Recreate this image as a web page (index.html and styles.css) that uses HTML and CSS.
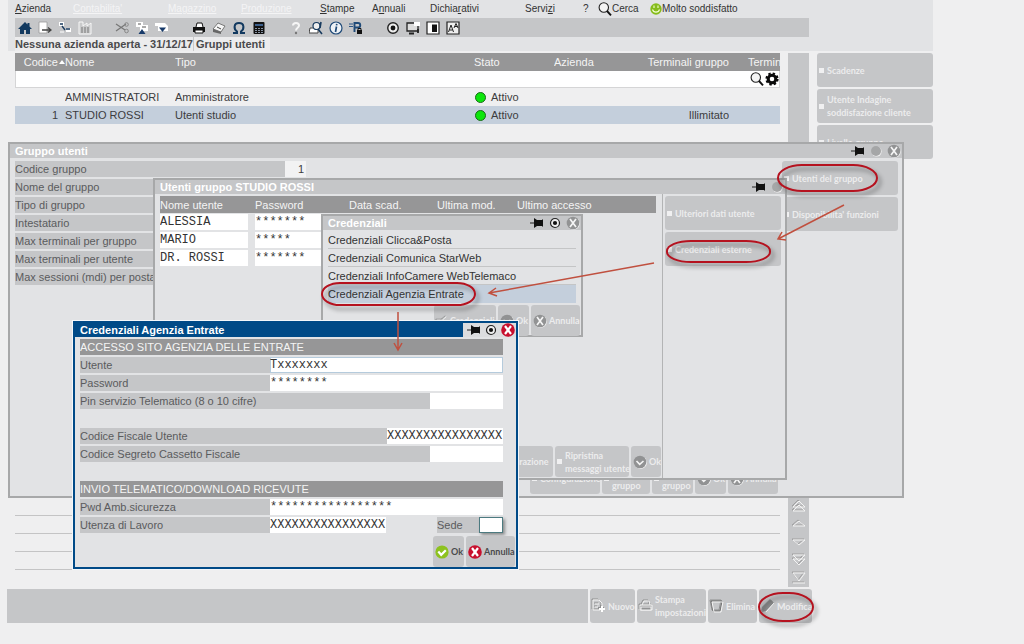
FILE: index.html
```html
<!DOCTYPE html>
<html lang="it">
<head>
<meta charset="utf-8">
<title>Gruppi utenti</title>
<link rel="stylesheet" href="styles.css">
</head>
<body>
<svg class="defs" aria-hidden="true">
  <symbol id="pin" viewBox="0 0 14 14"><path d="M0 7h5" stroke="#222" stroke-width="1"/><path d="M4 2l3 2h5l1-1v8l-1-1H7l-3 2z" fill="#111"/></symbol>
  <symbol id="target" viewBox="0 0 12 12"><circle cx="6" cy="6" r="4.5" fill="#eee" stroke="#222" stroke-width="1.2"/><circle cx="6" cy="6" r="2.1" fill="#111"/></symbol>
  <symbol id="disc" viewBox="0 0 12 12"><circle cx="6.6" cy="6.6" r="5" fill="#f1f1f1"/><circle cx="6" cy="6" r="5" fill="#a5a6a7"/></symbol>
  <symbol id="xgray" viewBox="0 0 14 14"><circle cx="7.6" cy="7.6" r="6.2" fill="#f3f3f3"/><circle cx="7" cy="7" r="6.3" fill="#929394"/><path d="M4 3l6 8M10 3l-6 8" stroke="#f5f5f5" stroke-width="1.7"/></symbol>
  <symbol id="xred" viewBox="0 0 14 14"><circle cx="7" cy="7" r="6.8" fill="#c8102e"/><path d="M4 3l6 8M10 3l-6 8" stroke="#fff" stroke-width="2.2"/></symbol>
  <symbol id="okgray" viewBox="0 0 14 14"><circle cx="7.7" cy="7.7" r="6.2" fill="#f3f3f3"/><circle cx="7" cy="7" r="6.3" fill="#919293"/><path d="M3.5 6l3.2 3.4L10.500 6" fill="none" stroke="#f5f5f5" stroke-width="1.6"/></symbol>
  <symbol id="okgreen" viewBox="0 0 14 14"><circle cx="7" cy="7" r="6.6" fill="#8dc21f"/><path d="M3.300 6.500l2.900 3.300 4.600-4.600" fill="none" stroke="#fff" stroke-width="2.2"/></symbol>
  <symbol id="lens" viewBox="0 0 14 14"><circle cx="5.800" cy="5.500" r="4.700" fill="#f4f4f4" stroke="#222" stroke-width="1.100"/><path d="M9 9l4 4.300" stroke="#111" stroke-width="1.900"/></symbol>
  <symbol id="printer" viewBox="0 0 14 14"><path d="M4 6l1-4h5l1 4" fill="#fff" stroke="#111"/><path d="M1 6h12v5H1z" fill="#111"/><path d="M3 9h8v3H3z" fill="#fff" stroke="#111"/></symbol>
</svg>

<div class="app">
  <header class="top">
    <nav class="menu">
      <a href="#"><u>A</u>zienda</a>
      <a href="#" class="off">Contabilita'</a>
      <a href="#" class="off">Magazzino</a>
      <a href="#" class="off">Produzione</a>
      <a href="#"><u>S</u>tampe</a>
      <a href="#">A<u>n</u>nuali</a>
      <a href="#">Dichia<u>r</u>ativi</a>
      <a href="#">Servi<u>z</u>i</a>
      <a href="#">?</a>
      <a href="#"><svg class="i14"><use href="#lens"/></svg>Cerca</a>
      <a href="#"><svg class="i12" viewBox="0 0 12 12"><circle cx="6" cy="6" r="5.700" fill="#86bc1c"/><path d="M4 2.500v2.500M8 2.500v2.500M2.500 6.500c1 3.500 6 3.500 7 0" stroke="#f4ffd8" stroke-width="1.100" fill="none"/></svg>Molto soddisfatto</a>
    </nav>
    <div class="toolbar">
      <div class="tools">
        <button aria-label="Home"><svg viewBox="0 0 14 14"><path d="M7 1L0 8h2v5h4V9h2v4h4V8h2l-2.500-2.500V2h-2v1.500z" fill="#12395f"/></svg></button>
        <button aria-label="Esci"><svg viewBox="0 0 14 14"><path d="M1 1h8v11H1z" fill="#fff" stroke="#999" stroke-width=".8"/><path d="M4 9h8M10 6.500L13 9l-3 2.500" stroke="#444" stroke-width="1.300" fill="none"/></svg></button>
        <button aria-label="Collega"><svg viewBox="0 0 14 14"><path d="M1 1h5v4H1zM8 7h5v4H8z" fill="#fff"/><path d="M2 3h3M4 5l3 4M8 8h4" stroke="#173a5e" stroke-width="1.300" fill="none"/><path d="M2 11h4" stroke="#fff"/></svg></button>
        <button aria-label="Azienda"><svg viewBox="0 0 14 14"><path d="M1 1v12h12V2L9 5V2L5 5V1z" fill="#c9cacb" stroke="#f7f7f7"/><path d="M3 7h8M3 9h8M3 11h8" stroke="#777" stroke-dasharray="2 1"/></svg></button>
      </div>
      <div class="tools">
        <button aria-label="Taglia"><svg viewBox="0 0 14 14"><path d="M1 3l9 6M1 10l10-7" stroke="#777" stroke-width="1.200"/><circle cx="11.500" cy="10" r="1.800" fill="none" stroke="#888"/><circle cx="11.500" cy="3.500" r="1.800" fill="none" stroke="#888"/></svg></button>
        <button aria-label="Copia"><svg viewBox="0 0 14 14"><path d="M1 1h7v5H1zM5 4h8v6H5z" fill="#fff"/><path d="M3 3h3M7 6h4" stroke="#555"/><path d="M7 8l3.500 5h-7z" fill="#173a6a"/></svg></button>
        <button aria-label="Incolla"><svg viewBox="0 0 14 14"><path d="M0 2h10l3 3v5H3V5H0z" fill="#fff"/><path d="M4 6.500h7L7.500 11z" fill="#173a6a"/></svg></button>
      </div>
      <div class="tools">
        <button aria-label="Stampa"><svg><use href="#printer"/></svg></button>
        <button aria-label="Cancella"><svg viewBox="0 0 14 14"><path d="M1 8l5-6 7 3-4 6z" fill="#f6f6f6" stroke="#777"/><path d="M1 8l8 3v2L1 11z" fill="#666"/><path d="M5 6l4 2" stroke="#444"/></svg></button>
        <button aria-label="Simboli"><svg viewBox="0 0 14 14"><path d="M1 12h4v-1.500C1.500 8 1.500 2 7 2s5.500 6 2 8.500V12h4" stroke="#12395f" stroke-width="2" fill="none"/></svg></button>
        <button aria-label="Calcolatrice"><svg viewBox="0 0 14 14"><rect x="1.500" y="1" width="11" height="12" rx="1" fill="#111"/><path d="M3 3h8v2H3z" fill="#3c5f8b"/><path d="M3 7.500h8M3 9.500h8M3 11.500h8" stroke="#8793a3" stroke-dasharray="2 1"/></svg></button>
      </div>
      <div class="tools">
        <button aria-label="Aiuto"><svg viewBox="0 0 14 14"><path d="M4 4.500C4 1 10 1 10 4.500 10 7 7 6.500 7 9.500" stroke="#f6f6f6" stroke-width="2" fill="none"/><circle cx="7" cy="12" r="1.200" fill="#777"/></svg></button>
        <button aria-label="Cerca stampa"><svg viewBox="0 0 14 14"><path d="M1 7h8v5H0z" fill="#fff" stroke="#444"/><circle cx="7.500" cy="5" r="3.500" fill="#eee" stroke="#173a5e" stroke-width="1.200"/><path d="M9 8l4 5M12 1l-1 6" stroke="#173a5e" stroke-width="1.600"/></svg></button>
        <button aria-label="Informazioni"><svg viewBox="0 0 14 14"><circle cx="7" cy="7" r="6" fill="#eef2f6" stroke="#1f4a78" stroke-width="1.200"/><path d="M7.500 5.500L6.500 11M7.800 2.800l-.3 1.500" stroke="#1f4a78" stroke-width="1.700"/></svg></button>
        <button aria-label="Permessi"><svg viewBox="0 0 14 14"><path d="M0 3h4M0 5.500h4" stroke="#2a5585"/><path d="M5.500 11V2h3.500c3 0 3 4.500 0 4.500H6" stroke="#1f4a78" stroke-width="1.900" fill="none"/><path d="M8 9h5v4H8z" fill="#111"/><path d="M9 9V7.500h3V9" stroke="#111" fill="none"/></svg></button>
      </div>
      <div class="tools">
        <button aria-label="Registra"><svg viewBox="0 0 12 12"><use href="#target"/></svg></button>
        <button aria-label="Schermo"><svg viewBox="0 0 14 14"><path d="M1 2h11v8H1z" fill="#ddd" stroke="#222" stroke-width="1.300"/><path d="M3 12.500h5M12 8v4" stroke="#222" stroke-width="1.800"/><path d="M8 1h6v4H8z" fill="#fff"/></svg></button>
        <button aria-label="Contrasto"><svg viewBox="0 0 14 14"><path d="M1 1h12v12H1z" fill="#fff" stroke="#222" stroke-width="1.200"/><path d="M6 3.500h5v7.500H6z" fill="#111"/></svg></button>
        <button aria-label="Carattere"><svg viewBox="0 0 14 14"><path d="M1 1h12v12H1z" fill="#eee" stroke="#222" stroke-width="1.200"/><path d="M2.500 11L5 4l2.500 7M3.500 9h3M8 7l2-4.500L12 7M8.500 5.500h3" stroke="#222" fill="none"/></svg></button>
      </div>
    </div>
    <h1 class="crumbs"><span>Nessuna azienda aperta - 31/12/17</span><span class="tab">Gruppi utenti</span></h1>
  </header>

  <div class="work">
    <main class="list">
      <table class="groups">
        <colgroup><col class="c1"><col class="c2"><col class="c3"><col class="c4"><col class="c5"><col class="c6"><col class="c7"></colgroup>
        <thead>
          <tr><th class="num">Codice<i class="sort"></i></th><th>Nome</th><th>Tipo</th><th>Stato</th><th>Azienda</th><th class="num">Terminali gruppo</th><th class="cut">Termin</th></tr>
        </thead>
        <tbody>
          <tr class="search"><td colspan="7"><div class="searchbar"><input aria-label="Ricerca"><svg class="i14"><use href="#lens"/></svg><svg class="i14" viewBox="0 0 14 14"><circle cx="7" cy="7" r="3.800" fill="none" stroke="#0a0a0a" stroke-width="3"/><circle cx="7" cy="7" r="5.600" fill="none" stroke="#0a0a0a" stroke-width="2" stroke-dasharray="2.400 2"/></svg></div></td></tr>
          <tr><td class="code"></td><td>AMMINISTRATORI</td><td>Amministratore</td><td><i class="led"></i>Attivo</td><td></td><td></td><td></td></tr>
          <tr class="sel"><td class="code">1</td><td>STUDIO ROSSI</td><td>Utenti studio</td><td><i class="led"></i>Attivo</td><td></td><td class="num">Illimitato</td><td></td></tr>
        </tbody>
      </table>
      <div class="rules"><i></i><i></i><i></i><i></i><i></i></div>
    </main>
    <div class="scroller">
      <svg viewBox="0 0 14 14"><path d="M1 8l6-6 6 6zM1 12l6-6 6 6z"/></svg>
      <svg viewBox="0 0 14 14"><path d="M1 9l6-5 6 5z"/></svg>
      <svg viewBox="0 0 14 14"><path d="M1 5l6 5 6-5z"/></svg>
      <svg viewBox="0 0 14 14"><path d="M1 2h12L7 8zM1 6h12l-6 6z"/></svg>
      <svg viewBox="0 0 14 14"><path d="M1 2h12L7 10zM1 12h12"/></svg>
    </div>
    <aside class="side">
      <button class="btn big"><i class="sq"></i>Scadenze</button>
      <button class="btn big"><i class="sq"></i><span>Utente Indagine<br>soddisfazione cliente</span></button>
      <button class="btn big"><i class="sq"></i>Livello gruppo</button>
    </aside>
  </div>

  <footer class="bottom">
    <div class="status"></div>
    <button class="btn b1"><svg class="i14 line" viewBox="0 0 14 14"><path d="M1 1h6l3 3v7H1zM3 5h4M3 8h3"/><path d="M10 7v6M7 10h6" stroke="#fff" stroke-width="2"/></svg>Nuovo</button>
    <button class="btn b2"><svg class="i14 line" viewBox="0 0 14 14"><path d="M3 6l2-4h5l1 4M1 6h12v5H1z"/><path d="M2 8h10v3H2z" fill="#929394"/></svg><span>Stampa<br>impostazioni</span></button>
    <button class="btn b3"><svg class="i14 line" viewBox="0 0 14 14"><path d="M1 2h11l-2 10H3z" stroke="#777"/><path d="M2 3h11l-2 10H4z"/></svg>Elimina</button>
    <button class="btn b4"><svg class="i14 line" viewBox="0 0 14 14"><path d="M1 13l1-4 8-8 3 3-8 8z" fill="#8a8b8c" stroke="none"/><path d="M5 13l8-9"/></svg>Modifica</button>
  </footer>
</div>

<section class="win w-group">
  <header class="bar"><h2>Gruppo utenti</h2><svg class="i14"><use href="#pin"/></svg><svg class="i12"><use href="#disc"/></svg><svg class="i14"><use href="#xgray"/></svg></header>
  <div class="cols">
    <div class="form">
      <div class="row"><label for="cod">Codice gruppo</label><input id="cod" class="code-in" value="1" readonly></div>
      <div class="row"><label>Nome del gruppo</label></div>
      <div class="row"><label>Tipo di gruppo</label></div>
      <div class="row"><label>Intestatario</label></div>
      <div class="row"><label>Max terminali per gruppo</label></div>
      <div class="row"><label>Max terminali per utente</label></div>
      <div class="row"><label>Max sessioni (mdi) per postazione</label></div>
    </div>
    <div class="side">
      <button class="btn big"><i class="sq"></i>Utenti del gruppo</button>
      <button class="btn big"><i class="sq"></i>Disponibilita' funzioni</button>
    </div>
  </div>
  <div class="actions">
    <button class="btn g1"><i class="sq"></i>Configurazione</button>
    <button class="btn g2"><i class="sq"></i><span>Copia<br>gruppo</span></button>
    <button class="btn g3"><i class="sq"></i><span>Stampa<br>gruppo</span></button>
    <button class="btn g4"><svg class="i14"><use href="#okgray"/></svg>Ok</button>
    <button class="btn g5"><svg class="i14"><use href="#xgray"/></svg>Annulla</button>
  </div>
</section>

<section class="win w-users">
  <header class="bar"><h2>Utenti gruppo STUDIO ROSSI</h2><svg class="i14"><use href="#pin"/></svg><svg class="i12"><use href="#disc"/></svg></header>
  <div class="cols">
    <div class="main">
      <table class="users">
        <colgroup><col class="u1"><col class="u2"><col class="u3"><col class="u4"><col></colgroup>
        <thead><tr><th>Nome utente</th><th>Password</th><th>Data scad.</th><th>Ultima mod.</th><th>Ultimo accesso</th></tr></thead>
        <tbody>
          <tr><td><input class="mono" aria-label="Nome utente 1" value="ALESSIA"></td><td><input class="mono" aria-label="Password 1" value="*******"></td><td></td><td></td><td></td></tr>
          <tr><td><input class="mono" aria-label="Nome utente 2" value="MARIO"></td><td><input class="mono" aria-label="Password 2" value="*****"></td><td></td><td></td><td></td></tr>
          <tr><td><input class="mono" aria-label="Nome utente 3" value="DR. ROSSI"></td><td><input class="mono" aria-label="Password 3" value="*******"></td><td></td><td></td><td></td></tr>
        </tbody>
      </table>
      <div class="actions">
        <button class="btn u-conf"><i class="sq"></i>Configurazione</button>
        <button class="btn u-rip"><i class="sq"></i><span>Ripristina<br>messaggi utente</span></button>
        <button class="btn u-ok"><svg class="i14"><use href="#okgray"/></svg>Ok</button>
      </div>
    </div>
    <div class="side">
      <button class="btn big"><i class="sq"></i>Ulteriori dati utente</button>
      <button class="btn big"><i class="sq"></i>Credenziali esterne</button>
    </div>
  </div>
</section>

<section class="win w-cred">
  <header class="bar"><h2>Credenziali</h2><svg class="i14"><use href="#pin"/></svg><svg class="i12"><use href="#target"/></svg><svg class="i14"><use href="#xgray"/></svg></header>
  <ul class="options">
    <li>Credenziali Clicca&amp;Posta</li>
    <li>Credenziali Comunica StarWeb</li>
    <li>Credenziali InfoCamere WebTelemaco</li>
    <li class="sel">Credenziali Agenzia Entrate</li>
  </ul>
  <div class="actions">
    <button class="btn k1"><svg class="i12 line" viewBox="0 0 14 14"><path d="M1 6h8v6H1zM5 8l7-6"/></svg>Credenziali</button>
    <button class="btn k2"><svg class="i14"><use href="#okgray"/></svg>Ok</button>
    <button class="btn k3"><svg class="i14"><use href="#xgray"/></svg>Annulla</button>
  </div>
</section>

<section class="win active w-agenzia">
  <header class="bar"><h2>Credenziali Agenzia Entrate</h2><div class="ctl"><svg class="i14"><use href="#pin"/></svg><svg class="i12"><use href="#target"/></svg><svg class="i14"><use href="#xred"/></svg></div></header>
  <form class="form">
    <h3>ACCESSO SITO AGENZIA DELLE ENTRATE</h3>
    <div class="row"><label for="ut">Utente</label><input id="ut" class="mono wide focus" value="Txxxxxxx"></div>
    <div class="row"><label for="pw">Password</label><input id="pw" class="mono wide" value="********"></div>
    <div class="row"><label for="pin-in">Pin servizio Telematico (8 o 10 cifre)</label><input id="pin-in" class="mono short"></div>
    <div class="row gap"><label for="cf">Codice Fiscale Utente</label><input id="cf" class="mono mid" value="XXXXXXXXXXXXXXXX"></div>
    <div class="row"><label for="cs">Codice Segreto Cassetto Fiscale</label><input id="cs" class="mono short"></div>
    <h3 class="gap">INVIO TELEMATICO/DOWNLOAD RICEVUTE</h3>
    <div class="row"><label for="amb">Pwd Amb.sicurezza</label><input id="amb" class="mono wide" value="*****************"></div>
    <div class="row last"><label for="lav">Utenza di Lavoro</label><input id="lav" class="mono mid" value="XXXXXXXXXXXXXXXX"><label for="sede" class="sede">Sede</label><input id="sede" class="mono sede-in"></div>
  </form>
  <div class="actions">
    <button class="btn live a1"><svg class="i14"><use href="#okgreen"/></svg>Ok</button>
    <button class="btn live a2"><svg class="i14"><use href="#xred"/></svg>Annulla</button>
  </div>
</section>

<svg class="notes" width="1024" height="644" aria-hidden="true">
  <g class="rings">
    <rect x="778" y="165" width="99" height="26" rx="24" ry="13"/>
    <rect x="667" y="241" width="103" height="21" rx="24" ry="10"/>
    <rect x="322" y="283" width="153" height="22" rx="18" ry="11"/>
    <rect x="759" y="593" width="54" height="28" rx="24" ry="14"/>
  </g>
  <g class="arrows">
    <path d="M844 205L778 239M786 240l-8-1 4-7"/>
    <path d="M654 263L489 293M497 296l-8-3 7-5"/>
    <path d="M398 312V350M394 343l4 7 4-7"/>
  </g>
</svg>
</body>
</html>
```

FILE: styles.css
```css
* { box-sizing: border-box; }
body {
  margin: 0;
  background: #efeff0;
  color: #3c3c3e;
  font: 11px/16px "Liberation Sans", Arial, sans-serif;
}
.defs { position: absolute; width: 0; height: 0; }
button, input { font: inherit; color: inherit; border: 0; margin: 0; padding: 0; background: none; }
h1, h2, h3, ul { margin: 0; padding: 0; font-size: 11px; }
.i14 { width: 14px; height: 14px; flex: none; }
.i12 { width: 12px; height: 12px; flex: none; }

.app { min-height: 100vh; padding-left: 8px; display: flex; flex-direction: column; }
.top { width: 925px; background: #e2e3e5; padding-left: 7px; }
.menu {
  display: grid;
  grid-template-columns: 58px 95px 73px 79px 52px 58px 95px 58px 15px 52px auto;
  height: 18px;
}
.menu a {
  display: flex;
  align-items: center;
  white-space: pre;
  color: #333;
  text-decoration: none;
  font: 10px/18px "Liberation Sans", Arial, sans-serif;
}
.menu a.off { color: #f4f4f5; text-decoration: underline; }
.toolbar { display: flex; gap: 17px; height: 19px; width: 794px; background: #c5c6c8; }
.tools { display: flex; }
.tools button { width: 20px; display: grid; place-items: center; }
.tools svg { width: 14px; height: 14px; }
.crumbs { display: flex; width: 255px; height: 14px; line-height: 14px; background: #ececed; color: #4a4a4c; white-space: nowrap; }
.crumbs .tab { padding-left: 2px; border-left: 1px solid #c9c9ca; }

.work { display: flex; height: 534px; margin-top: 2px; }
.list { width: 765px; margin: 0 8px 0 7px; display: flex; flex-direction: column; justify-content: space-between; }
table { border-collapse: collapse; table-layout: fixed; width: 100%; }
th, td { padding: 0; text-align: left; white-space: nowrap; overflow: hidden; font-weight: normal; }
th { background: #969697; color: #f4f4f4; height: 18px; }
.groups td { height: 18px; }
.groups .search td { height: 17px; }
.c1 { width: 50px; } .c2 { width: 110px; } .c3 { width: 299px; } .c4 { width: 80px; } .c5 { width: 75px; } .c6 { width: 100px; }
.num { text-align: right; }
.groups .code { text-align: right; padding-right: 7px; }
.cut { padding-left: 19px; }
.sort { display: inline-block; border: 3px solid transparent; border-top: 0; border-bottom: 4px solid #fff; margin: 0 0 2px 1px; }
.searchbar { display: flex; align-items: center; height: 17px; background: #fff; border: 1px solid #d5d5d6; border-top: 0; }
.searchbar input { flex: 1; }
.searchbar svg + svg { margin-left: 1px; }
.sel { background: #c4cfdc; }
.led { display: inline-block; width: 11px; height: 11px; margin: 0 5px 0 1px; border: 1px solid #186b18; border-radius: 50%; background: #0ce60c; vertical-align: -2px; }
.rules { display: grid; margin-bottom: 17px; }
.rules i { height: 18px; border-bottom: 1px solid #c4c4c5; }
.scroller { width: 21px; margin-right: 8px; background: #c5c6c8; display: flex; flex-direction: column; align-items: center; justify-content: flex-end; gap: 4px; padding-bottom: 2px; }
.scroller svg { width: 14px; height: 14px; fill: none; stroke: #f3f3f3; stroke-width: 1; filter: drop-shadow(-1px -1px 0 #a0a0a1); }
.side { display: flex; flex-direction: column; gap: 2px; }

.btn {
  display: flex;
  align-items: center;
  gap: 2px;
  height: 31px;
  padding: 0 1px 0 2px;
  flex: none;
  border-radius: 3px;
  background: #c5c6c8;
  color: #ececed;
  font: bold 9px/13px Lato, "Liberation Sans", sans-serif;
  text-align: left;
  white-space: nowrap;
}
.btn.big { width: 116px; height: 34px; }
.btn.live { color: #4a4a4c; }
.sq { width: 5px; height: 5px; margin-right: 1px; background: #f0f0f1; flex: none; }
.line { fill: none; stroke: #f3f3f3; stroke-width: 1; filter: drop-shadow(-1px -1px 0 #8f9091); }

.bottom { display: flex; gap: 2px; margin: 2px 0 0 -1px; }
.bottom .btn { height: 34px; }
.status { width: 581px; background: #c5c6c8; }
.b1 { width: 45px; } .b2 { width: 69px; } .b3 { width: 49px; } .b4 { width: 53px; }

.win { position: absolute; display: flex; flex-direction: column; background: #e2e3e5; border: 2px solid #a7a8a9; }
.w-group { left: 8px; top: 142px; width: 896px; height: 356px; }
.w-users { left: 153px; top: 178px; width: 634px; height: 302px; }
.w-cred { left: 321px; top: 214px; width: 262px; height: 123px; }
.w-agenzia { left: 73px; top: 321px; width: 445px; height: 248px; }
.win.active { border-color: #004a87; }
.bar { display: flex; align-items: center; gap: 5px; height: 14px; padding: 0 1px 0 5px; background: #c5c6c8; color: #fff; }
.bar h2 { flex: 1; line-height: 14px; }
.active .bar { background: #004a87; padding-right: 0; }
.ctl { display: flex; align-items: center; gap: 4px; padding: 0 1px 0 4px; background: #dcdddf; }
.w-users .bar { padding-right: 2px; }
.cols { display: flex; flex: 1; justify-content: space-between; }
.cols > .side { padding: 3px 4px 0 0; }
.row { display: flex; }
.row label { flex: 1; height: 16px; background: #c5c6c8; color: #5a5b5d; white-space: nowrap; overflow: hidden; }
.row input { height: 16px; background: #fff; }
.w-group .form { width: 291px; margin-left: 5px; padding-top: 3px; display: flex; flex-direction: column; gap: 2px; }
.row .code-in { width: 21px; background: #f2f2f3; text-align: right; padding-right: 2px; }
.actions { display: flex; gap: 2px; justify-content: flex-end; }
.w-group .actions { padding: 0 124px 2px 0; }
.g1 { width: 70px; } .g2 { width: 48px; } .g3 { width: 41px; } .g4 { width: 31px; } .g5 { width: 50px; }

.w-users .main { width: 508px; padding: 2px 0 0 5px; border-right: 1px solid #b3b4b5; display: flex; flex-direction: column; justify-content: space-between; }
.users { width: 496px; }
.users th { height: 17px; }
.users td { height: 18px; padding-right: 7px; }
.users td input { display: block; width: 100%; height: 16px; background: #fff; }
.u1 { width: 95px; } .u2 { width: 94px; } .u3 { width: 88px; } .u4 { width: 80px; }
.w-users .cols > .side { padding-top: 2px; }
.w-users .actions { padding: 0 1px 1px 0; }
.u-conf { width: 75px; } .u-rip { width: 74px; } .u-ok { width: 30px; }

.mono { font: 12px/16px "Liberation Mono", monospace; color: #333; }
.options { list-style: none; margin: 1px 5px 2px; }
.options li { height: 18px; line-height: 18px; border-bottom: 1px solid #c4c5c6; color: #333; }
.options .sel { border-color: #c4cfdc; }
.k1 { width: 62px; } .k2 { width: 31px; } .k3 { width: 49px; }
.w-cred .actions { padding-right: 1px; }

.w-agenzia { box-shadow: 0 0 0 1px #f4f7fa; }
.w-agenzia .form { width: 423px; margin: 2px 0 0 5px; display: flex; flex-direction: column; gap: 2px; }
h3 { height: 16px; background: #969697; color: #f4f4f4; font-weight: normal; white-space: nowrap; }
.form .gap { margin-top: 17px; }
.row .wide { width: 233px; }
.row .mid { width: 116px; }
.row .short { width: 73px; }
.row .focus { box-shadow: inset 0 0 0 1px #b5cbdc; }
.row.last label { flex: none; width: 190px; }
.row.last .sede { width: 42px; margin-left: 51px; }
.row .sede-in { width: 24px; border: 1px solid #4c7a80; box-shadow: 2px 2px 3px #8b8c8d; }
.w-agenzia .actions { margin-top: 3px; padding-right: 1px; }
.a1 { width: 31px; } .a2 { width: 49px; }

.notes { position: absolute; left: 0; top: 0; pointer-events: none; }
.rings { fill: none; stroke: #b5121f; stroke-width: 2; filter: drop-shadow(3px 4px 2px rgba(0, 0, 0, .4)); }
.arrows { fill: none; stroke: #c0503f; stroke-width: 1.5; }
```
